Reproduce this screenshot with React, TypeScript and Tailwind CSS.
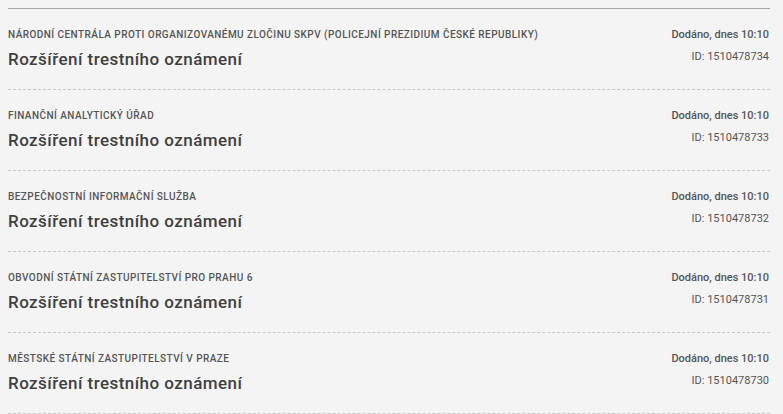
import React from "react";

const items = [
  { org: "Národní centrála proti organizovanému zločinu SKPV (Policejní prezidium České republiky)", id: "1510478734" },
  { org: "Finanční analytický úřad", id: "1510478733" },
  { org: "Bezpečnostní informační služba", id: "1510478732" },
  { org: "Obvodní státní zastupitelství pro Prahu 6", id: "1510478731" },
  { org: "Městské státní zastupitelství v Praze", id: "1510478730" },
];

export default function App() {
  return (
    <div className="min-h-[414px] w-full bg-[#f4f4f4] pt-2" style={{ fontFamily: "Roboto, 'Open Sans', sans-serif" }}>
      <div className="mx-2 w-[762px] border-b border-dashed border-[#c8c8c8]">
        {items.map((it, i) => (
          <div
            key={it.id}
            className={
              "flex justify-between pt-[19px] pb-[18px] border-t " +
              (i === 0 ? "border-solid border-[#a8a8a8]" : "border-dashed border-[#c8c8c8]")
            }
          >
            <div>
              <div className="text-[10px] leading-[14px] font-medium uppercase text-[#555] tracking-[0.45px]">{it.org}</div>
              <div className="mt-[5px] text-[17px] leading-[24px] font-medium text-[#3f3f3f] tracking-[0.45px]">Rozšíření trestního oznámení</div>
            </div>
            <div className="text-right pr-px">
              <div className="text-[11px] leading-[14px] font-medium text-[#555]">Dodáno, dnes 10:10</div>
              <div className="mt-[8px] text-[11px] leading-[14px] text-[#555]">ID: {it.id}</div>
            </div>
          </div>
        ))}
      </div>
    </div>
  );
}
